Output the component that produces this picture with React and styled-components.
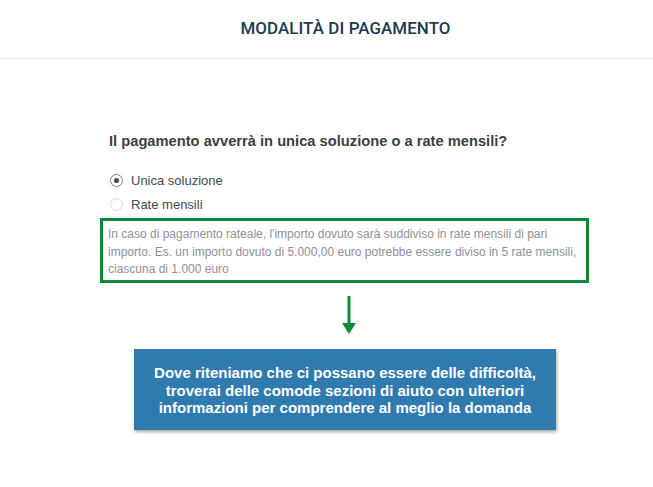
import React from "react";
import styled, { createGlobalStyle } from "styled-components";

const GlobalStyle = createGlobalStyle`
  html, body {
    margin: 0;
    padding: 0;
    background: #ffffff;
  }
  body {
    font-family: "Liberation Sans", Arial, sans-serif;
    -webkit-font-smoothing: antialiased;
  }
`;

const options = [
  { label: "Unica soluzione", checked: true },
  { label: "Rate mensili", checked: false },
];

const App = () => {
  return (
    <Page>
      <GlobalStyle />
      <Header>
        <Title>MODALITÀ DI PAGAMENTO</Title>
      </Header>
      <Content>
        <Question>Il pagamento avverrà in unica soluzione o a rate mensili?</Question>
        <RadioList>
          {options.map((o) => (
            <RadioRow key={o.label}>
              <Radio checked={o.checked} />
              <RadioLabel>{o.label}</RadioLabel>
            </RadioRow>
          ))}
        </RadioList>
        <HelpBox>
          In caso di pagamento rateale, l'importo dovuto sarà suddiviso in rate
          mensili di pari
          <br />
          importo. Es. un importo dovuto di 5.000,00 euro potrebbe essere diviso
          in 5 rate mensili,
          <br />
          ciascuna di 1.000 euro
        </HelpBox>
      </Content>
      <ArrowWrap>
        <svg width="14" height="40" viewBox="0 0 14 40">
          <rect x="5.5" y="0" width="3" height="30" fill="#108a36" />
          <polygon points="0,27 14,27 7,38" fill="#108a36" />
        </svg>
      </ArrowWrap>
      <Callout>
        Dove riteniamo che ci possano essere delle difficoltà,
        <br />
        troverai delle comode sezioni di aiuto con ulteriori
        <br />
        informazioni per comprendere al meglio la domanda
      </Callout>
    </Page>
  );
};

export default App;

const Page = styled.div`
  width: 653px;
  height: 487px;
  display: flex;
  flex-direction: column;
  overflow: hidden;
`;

const Header = styled.header`
  height: 58px;
  border-bottom: 1px solid #ececec;
  display: flex;
  align-items: center;
  justify-content: center;
  box-sizing: content-box;
`;

const Title = styled.h1`
  margin: 0 0 3px 38px;
  font-family: Roboto, "Liberation Sans", Arial, sans-serif;
  font-size: 16.9px;
  font-weight: 500;
  letter-spacing: 0.1px;
  color: #1d3a4e;
`;

const Content = styled.main`
  padding: 74px 0 0 100px;
  display: flex;
  flex-direction: column;
`;

const Question = styled.h2`
  margin: 0 0 0 9px;
  font-size: 14.7px;
  font-weight: 700;
  color: #3b3f44;
`;

const RadioList = styled.div`
  display: flex;
  flex-direction: column;
  gap: 6px;
  margin: 22px 0 0 10px;
`;

const RadioRow = styled.label`
  display: flex;
  align-items: center;
  gap: 8px;
  height: 18px;
`;

const Radio = styled.span`
  width: 11px;
  height: 11px;
  border-radius: 50%;
  border: 1px solid ${(p) => (p.checked ? "#7a7f85" : "#d8dadd")};
  position: relative;
  flex-shrink: 0;

  &::after {
    content: "";
    display: ${(p) => (p.checked ? "block" : "none")};
    position: absolute;
    left: 3px;
    top: 3px;
    width: 5px;
    height: 5px;
    border-radius: 50%;
    background: #3f4d5a;
  }
`;

const RadioLabel = styled.span`
  font-size: 13px;
  color: #44484d;
`;

const HelpBox = styled.div`
  margin-top: 5px;
  width: 473px;
  height: 54px;
  border: 3px solid #0b8a33;
  padding: 5px 5px 0 5px;
  box-sizing: content-box;
  font-size: 12px;
  line-height: 17.5px;
  color: #8e9296;
  white-space: nowrap;
`;

const ArrowWrap = styled.div`
  display: flex;
  justify-content: flex-start;
  padding-left: 342px;
  margin-top: 13px;
`;

const Callout = styled.div`
  margin: 13px 0 0 134px;
  width: 422px;
  height: 81px;
  box-sizing: border-box;
  background: #2f7bb0;
  box-shadow: 1px 2px 3px rgba(0, 0, 0, 0.35);
  color: #ffffff;
  font-size: 15px;
  font-weight: 700;
  line-height: 17.5px;
  text-align: center;
  display: flex;
  align-items: center;
  justify-content: center;
  padding-top: 2px;
`;
